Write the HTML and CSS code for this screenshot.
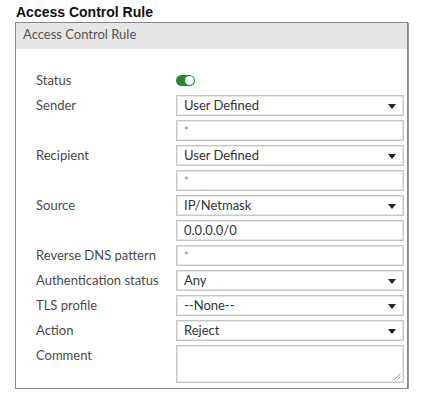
FILE: index.html
```html
<!DOCTYPE html>
<html lang="en">
<head>
    <meta charset="UTF-8">
    <title>Access Control Rule</title>
    <link rel="stylesheet" href="styles.css">
</head>
<body>
    <h1 class="page-title">Access Control Rule</h1>

    <div class="panel">
        <div class="panel-header">Access Control Rule</div>

        <div class="form">
            <div class="label">Status</div>
            <div class="control"><span class="toggle"><span class="knob"></span></span></div>

            <div class="label">Sender</div>
            <div class="select">User Defined<span class="arrow"></span></div>
            <div class="label"></div>
            <div class="input muted">*</div>

            <div class="label">Recipient</div>
            <div class="select">User Defined<span class="arrow"></span></div>
            <div class="label"></div>
            <div class="input muted">*</div>

            <div class="label">Source</div>
            <div class="select">IP/Netmask<span class="arrow"></span></div>
            <div class="label"></div>
            <div class="input">0.0.0.0/0</div>

            <div class="label">Reverse DNS pattern</div>
            <div class="input muted">*</div>

            <div class="label">Authentication status</div>
            <div class="select">Any<span class="arrow"></span></div>

            <div class="label">TLS profile</div>
            <div class="select">--None--<span class="arrow"></span></div>

            <div class="label">Action</div>
            <div class="select">Reject<span class="arrow"></span></div>

            <div class="label">Comment</div>
            <div class="textarea">
                <svg class="grip" width="7" height="7" viewBox="0 0 7 7">
                    <path d="M6.5 0.5 L0.5 6.5 M6.5 3.5 L3.5 6.5" stroke="#999" stroke-width="1" fill="none"/>
                </svg>
            </div>
        </div>
    </div>
</body>
</html>
```

FILE: styles.css
```css
body {
    margin: 0;
    padding: 4px 15px 0 15px;
    font-family: Lato, "Open Sans", sans-serif;
    background: #fff;
}
.page-title {
    font-family: "Liberation Sans", Arial, sans-serif;
    font-size: 14px;
    font-weight: bold;
    color: #111;
    margin: 0 0 1px 1px;
    line-height: 17px;
}
.panel {
    width: 391px;
    border: 1px solid #888;
    box-shadow: 1px 1px 0 #999;
}
.panel-header {
    background: #e6e6e6;
    height: 26px;
    line-height: 22px;
    padding-left: 7px;
    font-size: 13px;
    color: #555;
}
.form {
    display: grid;
    grid-template-columns: 140px 228px;
    row-gap: 4px;
    padding: 21px 0 5px 20px;
}
.label {
    font-size: 13px;
    color: #4a4a4a;
    line-height: 21px;
    white-space: nowrap;
}
.control {
    display: flex;
    align-items: center;
    height: 21px;
}
.toggle {
    width: 19px;
    height: 11px;
    border-radius: 6px;
    background: #1f8a2e;
    position: relative;
}
.knob {
    position: absolute;
    right: 1px;
    top: 1px;
    width: 9px;
    height: 9px;
    border-radius: 50%;
    background: #fff;
}
.select,
.input,
.textarea {
    box-sizing: border-box;
    height: 21px;
    border: 1px solid #c6c6c6;
    box-shadow: inset 0 0 0 1px #e6e6e6;
    font-size: 13px;
    color: #333;
    padding: 0 7px;
    line-height: 19px;
    position: relative;
}
.muted {
    color: #888;
    font-size: 11px;
}
.arrow {
    position: absolute;
    right: 7px;
    top: 8px;
    width: 0;
    height: 0;
    border-left: 4px solid transparent;
    border-right: 4px solid transparent;
    border-top: 5px solid #222;
}
.textarea {
    height: 38px;
}
.grip {
    position: absolute;
    right: 2px;
    bottom: 2px;
}
```
